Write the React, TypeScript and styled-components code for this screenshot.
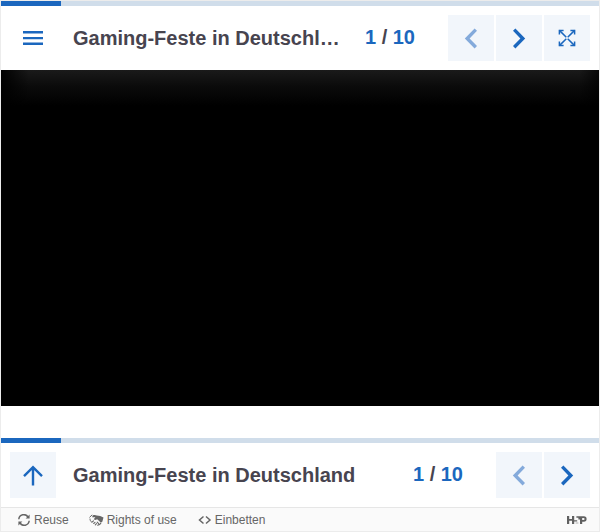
import React from "react";
import styled, { createGlobalStyle } from "styled-components";

const GlobalStyle = createGlobalStyle`
  *, *::before, *::after { box-sizing: border-box; }
  body {
    margin: 0;
    background: #fff;
    font-family: "Liberation Sans", Arial, sans-serif;
  }
`;

const Frame = styled.main`
  border: 1px solid #ececec;
`;

const Track = styled.div`
  height: 5px;
  background: #d0ddea;
`;

const Progress = styled.div`
  height: 100%;
  background: #1b67be;
`;

const Bar = styled.nav`
  display: flex;
  align-items: center;
  height: 64px;
  padding: 0 9px;
  background: #fff;
`;

const IconButton = styled.button<{ $plain?: boolean }>`
  display: flex;
  flex: none;
  align-items: center;
  justify-content: center;
  width: 46px;
  height: 46px;
  padding: 0;
  border: 0;
  background: ${(p) => (p.$plain ? "transparent" : "#f2f6fb")};
  color: #1b67be;
  cursor: pointer;

  &:disabled {
    color: #84aadb;
    cursor: default;
  }
`;

const Title = styled.h1`
  flex: 1;
  min-width: 0;
  margin: 0 24px 0 17px;
  overflow: hidden;
  color: #47444f;
  font-size: 20px;
  line-height: 24px;
  text-overflow: ellipsis;
  white-space: nowrap;
`;

const Counter = styled.p`
  flex: none;
  margin: 0 33px 2px 0;
  color: #1b67be;
  font-size: 20px;
  font-weight: bold;
  line-height: 24px;
`;

const Slash = styled.span`
  color: #47444f;
`;

const Buttons = styled.div`
  display: flex;
  gap: 2px;
`;

const Stage = styled.section`
  height: 336px;
  margin-bottom: 32px;
  background:
    linear-gradient(to right, #000, transparent 28px, transparent calc(100% - 20px), rgba(0, 0, 0, 0.7)),
    linear-gradient(#1a1a1a, #0b0b0b 16px, #000 36px);
  background-color: #000;
`;

const Footer = styled.footer`
  display: flex;
  align-items: center;
  gap: 20px;
  height: 24px;
  padding: 0 12px 0 16px;
  border-top: 1px solid #e6e6e6;
  background: #fafafa;
  color: #666;
`;

const FooterButton = styled.button`
  display: flex;
  align-items: center;
  gap: 3px;
  padding: 0;
  border: 0;
  background: none;
  color: inherit;
  font: 12px/16px "Liberation Sans", Arial, sans-serif;
  white-space: nowrap;
  cursor: pointer;
`;

const LogoLink = styled.a`
  display: flex;
  margin-left: auto;
  color: #606060;
`;

const Chevron = ({ back }: { back?: boolean }) => (
  <svg width="24" height="24" viewBox="0 0 24 24" fill="currentColor" aria-hidden="true">
    <path d={back ? "M15.6 2.4 18 4.8 10.6 12.5 18 20.1l-2.4 2.4L5.8 12.5z" : "M8.4 2.4 6 4.8l7.4 7.7L6 20.1l2.4 2.4 9.8-10z"} />
  </svg>
);

const MenuIcon = () => (
  <svg width="22" height="22" viewBox="0 0 22 22" fill="currentColor" aria-hidden="true">
    <path d="M1 4.1h20v2.4H1zM1 9.9h20v2.4H1zM1 15.6h20V18H1z" />
  </svg>
);

const ExpandIcon = () => (
  <svg width="18" height="18" viewBox="0 0 18 18" fill="none" stroke="currentColor" strokeWidth="1.5" aria-hidden="true">
    <path d="M1.4 5.6V1.4h4.2M12.4 1.4h4.2v4.2M16.6 12.4v4.2h-4.2M5.6 16.6H1.4v-4.2" />
    <path d="M1.4 1.4 8.3 8.3M16.6 1.4 9.7 8.3M16.6 16.6 9.7 9.7M1.4 16.6l6.9-6.9" />
  </svg>
);

const UpIcon = () => (
  <svg width="24" height="24" viewBox="0 0 24 24" fill="none" stroke="currentColor" strokeWidth="2.4" aria-hidden="true">
    <path d="M12 22.5V4.2M3 13.2l9-9 9 9" />
  </svg>
);

const ReuseIcon = () => (
  <svg width="14" height="12" viewBox="0 0 14 12" fill="none" stroke="currentColor" strokeWidth="1.5" aria-hidden="true">
    <path d="M1.8 5.2A5 5 0 0 1 11 3M12.2 6.8A5 5 0 0 1 3 9" />
    <path d="M12.6.6v4H8.6zM1.4 11.4v-4h4z" fill="currentColor" stroke="none" />
  </svg>
);

const RightsIcon = () => (
  <svg width="15" height="12" viewBox="0 0 15 12" fill="none" stroke="currentColor" aria-hidden="true">
    <path d="M.5 3.4 3.2.8M1 4.6c0 1.6.6 2.8 1.8 3.8" strokeWidth="1" />
    <path d="M3.6 1.6C5.2.8 6.6 1 7.8 1.6l3.4.4 3.3 1.6-1.2 4.2-1.6.8-3.5-3.4-2 .8-1.5-.7 1.7-2H3.2z" fill="currentColor" stroke="none" />
    <path d="m3.2 8 1.3-1.1M4.7 9.5l1.3-1.2M6.3 10.8l1.2-1.1M8.6 11.2c1.8-.3 2.8-1.1 3.3-2.2M8.2 8.2l1.5 1.5" strokeWidth="1.1" strokeLinecap="round" />
  </svg>
);

const EmbedIcon = () => (
  <svg width="15" height="12" viewBox="0 0 15 12" fill="none" stroke="currentColor" strokeWidth="1.5" aria-hidden="true">
    <path d="M6.5 2.5 2.5 6l4 3.5M9 2.5 13 6 9 9.5" />
  </svg>
);

const Logo = () => (
  <svg width="20" height="10" viewBox="0 0 20 10" fill="currentColor" aria-hidden="true">
    <path d="M0 1h2.2v2.9h2.8V1h2.2v4.2h3v1.4h-3V9H5V5.8H2.2V9H0z" />
    <path fillRule="evenodd" d="M9.4 1.2h7.4a2.8 2.8 0 0 1 0 5.6h-1.6V9H13V4.6h-1.6V2.7h-2zm5.8 1.7v2.2h1.3a1.1 1.1 0 0 0 0-2.2z" />
    <path d="M8.6 7.4h2.8v1.2H8.6z" opacity=".4" />
  </svg>
);

const SlideCount = () => (
  <Counter>
    1 <Slash>/</Slash> 10
  </Counter>
);

const ProgressBar = ({ value }: { value: number }) => (
  <Track role="progressbar" aria-label="Progress" aria-valuenow={value}>
    <Progress style={{ width: `${value}%` }} />
  </Track>
);

const PageButtons = () => (
  <>
    <IconButton aria-label="Previous page" disabled>
      <Chevron back />
    </IconButton>
    <IconButton aria-label="Next page">
      <Chevron />
    </IconButton>
  </>
);

export default function App() {
  return (
    <>
      <GlobalStyle />
      <Frame>
        <ProgressBar value={10} />
        <Bar aria-label="Top navigation">
          <IconButton $plain aria-label="Table of contents">
            <MenuIcon />
          </IconButton>
          <Title>Gaming-Feste in Deutschland</Title>
          <SlideCount />
          <Buttons>
            <PageButtons />
            <IconButton aria-label="Fullscreen">
              <ExpandIcon />
            </IconButton>
          </Buttons>
        </Bar>
        <Stage aria-label="Content" />
        <ProgressBar value={10} />
        <Bar aria-label="Bottom navigation">
          <IconButton aria-label="Back to top">
            <UpIcon />
          </IconButton>
          <Title as="h2">Gaming-Feste in Deutschland</Title>
          <SlideCount />
          <Buttons>
            <PageButtons />
          </Buttons>
        </Bar>
        <Footer>
          <FooterButton>
            <ReuseIcon />
            Reuse
          </FooterButton>
          <FooterButton>
            <RightsIcon />
            Rights of use
          </FooterButton>
          <FooterButton>
            <EmbedIcon />
            Einbetten
          </FooterButton>
          <LogoLink href="#h5p" aria-label="H5P">
            <Logo />
          </LogoLink>
        </Footer>
      </Frame>
    </>
  );
}
